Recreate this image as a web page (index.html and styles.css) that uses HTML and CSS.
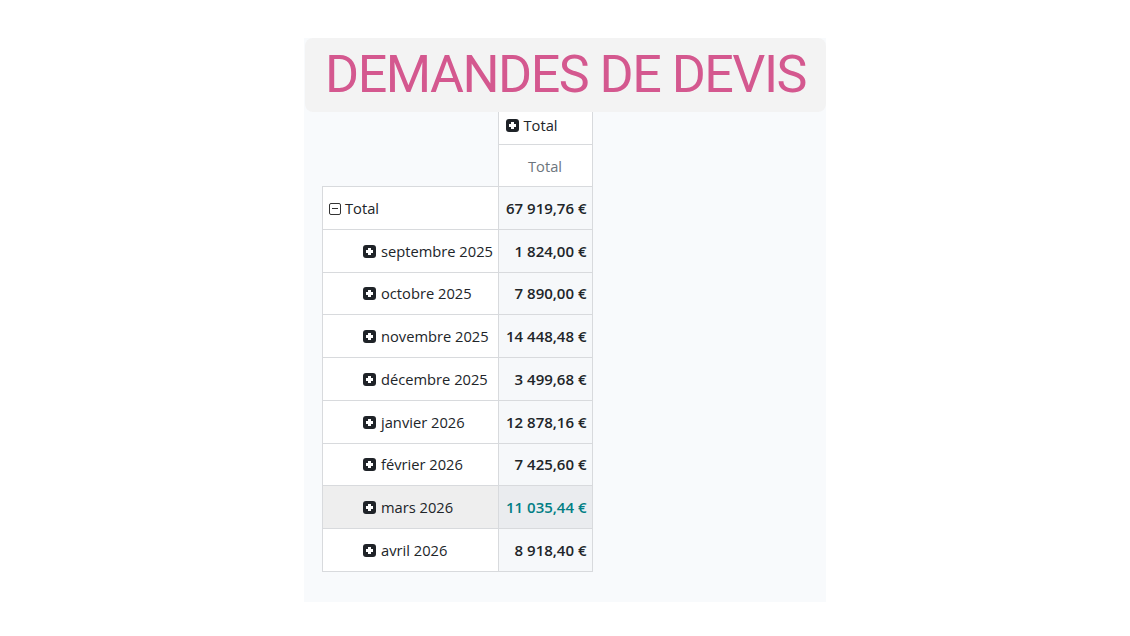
FILE: index.html
```html
<!DOCTYPE html>
<html lang="fr">
<head>
  <meta charset="UTF-8">
  <meta name="viewport" content="width=device-width, initial-scale=1.0">
  <title>Demandes de devis</title>
  <link rel="stylesheet" href="styles.css">
</head>
<body>
  <div class="panel">
    <div class="title">DEMANDES DE DEVIS</div>
    <div class="pivot">
      <table>
        <thead>
          <tr class="head-top">
            <th class="corner"></th>
            <th class="col-head"><span class="ico plus"></span>Total</th>
          </tr>
          <tr class="head-measure">
            <th class="corner"></th>
            <th class="measure">Total</th>
          </tr>
        </thead>
        <tbody id="rows">
          <tr>
            <td class="row-head total"><span class="ico minus"></span>Total</td>
            <td class="value">67 919,76 €</td>
          </tr>
        </tbody>
      </table>
    </div>
  </div>

  <script>
    const mois = [
      ["septembre 2025", "1 824,00 €"],
      ["octobre 2025", "7 890,00 €"],
      ["novembre 2025", "14 448,48 €"],
      ["décembre 2025", "3 499,68 €"],
      ["janvier 2026", "12 878,16 €"],
      ["février 2026", "7 425,60 €"],
      ["mars 2026", "11 035,44 €"],
      ["avril 2026", "8 918,40 €"]
    ];

    const rows = document.getElementById('rows');
    mois.forEach(([nom, montant]) => {
      const tr = document.createElement('tr');
      if (nom === "mars 2026") tr.className = 'hover';
      tr.innerHTML = `
        <td class="row-head"><span class="ico plus"></span>${nom}</td>
        <td class="value">${montant}</td>
      `;
      rows.appendChild(tr);
    });
  </script>
</body>
</html>
```

FILE: styles.css
```css
body { margin: 0; background: #fff; font-family: "Open Sans", "Noto Sans", sans-serif; color: #212529; }
.panel { width: 522px; margin: 38px auto 0; background: #f8fafc; padding-bottom: 30px; }
.title { height: 74px; background: #f3f3f3; border-radius: 8px; color: #d4588f; font-family: Roboto, sans-serif; font-size: 52px; letter-spacing: -1.5px; line-height: 74px; text-align: center; white-space: nowrap; margin-left: 1px; }
.pivot { padding: 0 18px; }
table { border-collapse: collapse; font-size: 14.7px; }
th, td { border: 1px solid #d8dadd; padding: 0; white-space: nowrap; }
th.corner { border: none; border-bottom: 1px solid #d8dadd; width: 175px; }
.head-top th.corner { border-bottom: none; }
.head-top th { height: 29px; padding-top: 3px; vertical-align: top; }
.col-head { border-top: none; background: #fff; font-weight: normal; text-align: left; padding: 0 7px; width: 79px; }
.measure { height: 41px; background: #fff; color: #6c757d; font-weight: normal; text-align: center; }
td { height: 41.75px; }
.row-head { background: #fff; padding-left: 40px; }
.row-head.total { padding-left: 6px; }
.value { background: #f6f8fa; text-align: right; font-weight: 600; font-size: 15px; padding-right: 5px; }
tr.hover .row-head { background: #eeeeee; }
tr.hover .value { background: #eaecef; color: #017e84; }
.ico { display: inline-block; width: 13px; height: 13px; margin-right: 5px; vertical-align: -1px; border-radius: 3px; position: relative; box-sizing: border-box; }
.ico.plus { background: #1f2328; }
.ico.plus::before, .ico.plus::after { content: ""; position: absolute; background: #fff; }
.ico.plus::before { left: 3px; right: 3px; top: 5px; height: 3px; }
.ico.plus::after { top: 3px; bottom: 3px; left: 5px; width: 3px; }
.ico.minus { border: 1.3px solid #333; border-radius: 2px; width: 12px; height: 12px; margin-right: 4px; }
.ico.minus::before { content: ""; position: absolute; left: 2px; right: 2px; top: 4px; height: 1.3px; background: #333; }
```
